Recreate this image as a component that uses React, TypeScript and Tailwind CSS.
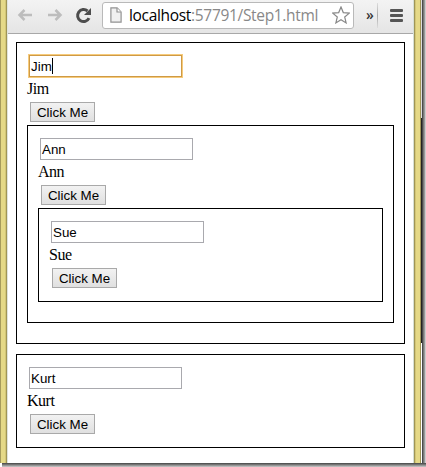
import type { ReactNode } from "react";

type PersonProps = { name: string; focused?: boolean; children?: ReactNode };

function Person({ name, focused, children }: PersonProps) {
  return (
    <div className="mb-[10px] border border-black p-[10px]">
      <div className="flex h-[26px] pt-[2px] pl-[2px]">
        <div
          className={
            "flex h-[22px] w-[153px] items-center border bg-white pt-[2px] pl-px font-['Liberation_Sans',Arial,sans-serif] text-[13.333px] leading-[18px] " +
            (focused ? "border-[#cf9a45] shadow-[0_0_0_1px_#f6cb7c]" : "border-[#a9a9ae]")
          }
        >
          <span>{name}</span>
          {focused && <span className="-mt-[2px] h-4 w-px bg-black" />}
        </div>
      </div>
      <div className="h-[20px] pt-px text-[16px] leading-[18px] tracking-[-0.5px]">{name}</div>
      <div className="flex h-[26px] pt-[3px] pl-[3px]">
        <button className="h-5 w-[65px] border border-[#a9a9a9] bg-linear-to-b from-[#f2f2f2] to-[#e0e0e0] pt-px font-['Liberation_Sans',Arial,sans-serif] text-[13.333px] leading-[18px] whitespace-nowrap">
          Click Me
        </button>
      </div>
      {children}
    </div>
  );
}

function Arrow({ flip }: { flip?: boolean }) {
  return (
    <svg width="16" height="14" viewBox="0 0 16 14" className={flip ? "-scale-x-100" : ""}>
      <path d="M7.500 2 2.500 7l5 5M3 7h12" fill="none" stroke="#bdbdbd" strokeWidth="2.5" />
    </svg>
  );
}

function Toolbar() {
  return (
    <div className="flex h-[34px] items-center border-b border-[#a8a8a8] bg-linear-to-b from-[#f3f3f3] to-[#e5e5e5] pb-[3px] pl-[9px]">
      <Arrow />
      <div className="ml-[14px]">
        <Arrow flip />
      </div>
      <svg width="17" height="17" viewBox="0 0 17 17" className="ml-[12px]">
        <path d="M14 11.200A6 6 0 1 1 12.500 4" fill="none" stroke="#4d4d4d" strokeWidth="3" />
        <path d="M16 1v7H9z" fill="#4d4d4d" />
      </svg>
      <div className="ml-[10px] flex h-[27px] w-[252px] items-center rounded-[3px] border border-[#b9b9b9] bg-white pl-[7px]">
        <svg width="12" height="16" viewBox="0 0 12 16">
          <path d="M.9.9h6.2l4 4v10.2H.9z" fill="#f1f1f1" stroke="#929292" strokeWidth="1.2" />
          <path d="M7 1v4h4" fill="#fff" stroke="#929292" strokeWidth="1.2" />
        </svg>
        <div className="ml-[7px] w-[203px] font-['Open_Sans',sans-serif] text-[15.500px] leading-6 tracking-[-0.32px] whitespace-nowrap text-[#888]">
          <span className="text-black">localhost</span>:57791/Step1.html
        </div>
        <svg width="18" height="18" viewBox="0 0 18 18" className="shrink-0">
          <path d="m9 1 2.300 5.600 6 .5-4.600 3.900 1.400 5.900L9 13.800l-5.100 3.100L5.300 11 .7 7.100l6-.5z" fill="#fff" stroke="#888" strokeWidth="1.2" />
        </svg>
      </div>
      <div className="ml-[12px] w-[11px] font-['Open_Sans',sans-serif] text-[14px] leading-5 font-semibold text-[#333]">»</div>
      <div className="h-[25px] w-px bg-linear-to-b from-[#ddd] via-[#aaa] to-[#ddd]" />
      <div className="ml-[12px] flex flex-col gap-[2px]">
        <div className="h-[3px] w-[13px] rounded-[1px] bg-[#555]" />
        <div className="h-[3px] w-[13px] rounded-[1px] bg-[#555]" />
        <div className="h-[3px] w-[13px] rounded-[1px] bg-[#555]" />
      </div>
    </div>
  );
}

export default function App() {
  return (
    <div className="h-[467px] w-[426px] overflow-hidden bg-white font-['Liberation_Serif','Times_New_Roman',serif] text-black">
      <div className="flex h-[463px]">
        <div className="flex w-[8px] shrink-0">
          <div className="w-px bg-[#a69b5c]" />
          <div className="w-[4px] bg-[#e5d987]" />
          <div className="w-px bg-[#d2c677]" />
          <div className="w-px bg-[#a09556]" />
          <div className="w-px bg-[#e0e4dc]" />
        </div>
        <div className="w-[405px] shrink-0">
          <Toolbar />
          <div className="pt-[8px] pr-[8px] pl-[8px]">
            <Person name="Jim" focused>
              <Person name="Ann">
                <Person name="Sue" />
              </Person>
            </Person>
            <Person name="Kurt" />
          </div>
        </div>
        <div className="flex w-[13px] shrink-0">
          <div className="w-px bg-[#d6dfd5]" />
          <div className="w-px bg-[#a09556]" />
          <div className="w-px bg-[#d2c677]" />
          <div className="w-[4px] bg-[#e5d987]" />
          <div className="w-px bg-[#a09556]" />
          <div className="flex w-px flex-col">
            <div className="h-[118px] bg-[#ddd]" />
            <div className="h-[225px] bg-[#222]" />
            <div className="grow bg-white" />
          </div>
          <div className="w-px bg-[#4a4a4a]" />
          <div className="w-px bg-[#777]" />
          <div className="w-px bg-[#999]" />
          <div className="w-px bg-[#ccc]" />
        </div>
      </div>
      <div className="ml-[2px] h-[4px] bg-linear-to-b from-[#444] to-[#ccc]" />
    </div>
  );
}
